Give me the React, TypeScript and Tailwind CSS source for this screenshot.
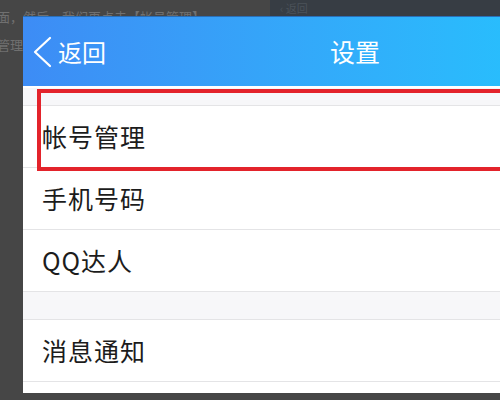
import React from 'react';

const rows = ['帐号管理', '手机号码', 'QQ达人'];

const Row: React.FC<{ label: string }> = ({ label }) => (
  <div className="h-[62px] flex items-center pl-[19px] border-b border-[#e4e4e6] bg-white">
    <span className="text-[25px] text-[#1c1c1c] tracking-[1px]">{label}</span>
  </div>
);

export default function App() {
  return (
    <div
      className="relative w-[500px] h-[400px] overflow-hidden bg-[#464646]"
      style={{ fontFamily: '"Noto Sans CJK SC", "Noto Sans", sans-serif' }}
    >
      {/* tutorial text behind the screenshot */}
      <div className="absolute left-[-3px] top-[3px] text-[13px] leading-[28px] text-[#707070]">
        <p>面，然后，我们再点击【帐号管理】</p>
        <p>管理</p>
      </div>
      <div className="absolute left-[270px] top-0 w-[230px] h-[17px] bg-[#373d44] flex items-center pl-[10px] text-[11px] text-[#4b525a]">
        ‹ 返回
      </div>

      {/* phone screenshot */}
      <div className="absolute left-[23px] top-[16px] w-[664px] h-[377px] bg-white flex flex-col">
        <div className="h-[70px] grid grid-cols-3 items-center bg-gradient-to-r from-[#3d8cf5] to-[#19cfff] border-t border-[#2a6fb8] text-white">
          <div className="flex items-center gap-[6px] pl-[9px]">
            <svg width="20" height="32" viewBox="0 0 20 32" fill="none">
              <path d="M18 2 L3 16 L18 30" stroke="white" strokeWidth="2.2" strokeLinecap="round" strokeLinejoin="round" />
            </svg>
            <span className="text-[24px]">返回</span>
          </div>
          <div className="text-center text-[25px]">设置</div>
          <div />
        </div>
        <div className="h-[2px] bg-white" />
        <div className="h-[18px] bg-[#f7f7f9] border-b border-[#e4e4e6]" />
        {rows.map((r) => (
          <Row key={r} label={r} />
        ))}
        <div className="h-[28px] bg-[#f7f7f9] border-b border-[#e4e4e6]" />
        <Row label="消息通知" />
        <div className="flex-1 bg-white" />

        {/* red highlight */}
        <div className="absolute left-[14px] top-[73px] w-[700px] h-[82px] border-[4px] border-[#e3232b]" />
      </div>
    </div>
  );
}
